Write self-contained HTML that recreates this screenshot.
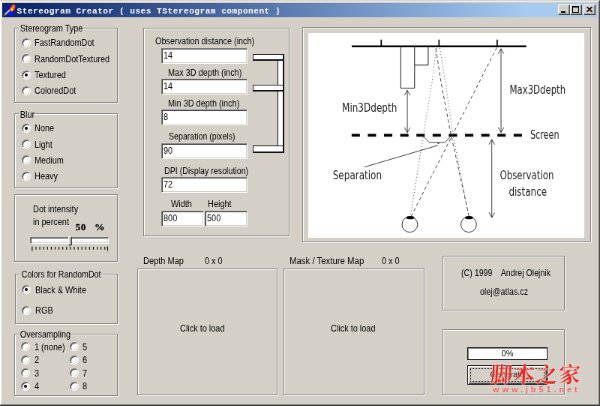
<!DOCTYPE html>
<html>
<head>
<meta charset="utf-8">
<title>Stereogram Creator</title>
<style>
html,body{margin:0;padding:0;width:600px;height:406px;overflow:hidden;background:#d4d0c8;}
#win{position:absolute;left:0;top:0;width:800px;height:542px;transform:scale(0.75);transform-origin:0 0;will-change:transform;font-family:"Liberation Sans",sans-serif;font-size:11px;color:#000;overflow:hidden;}
#win *{box-sizing:border-box;}
.abs{position:absolute;}
.frameL{position:absolute;left:-1px;top:0;width:801px;height:540.5px;border:1px solid;border-color:#d4d0c8 #404040 #404040 #d4d0c8;}
.frameI{position:absolute;left:0px;top:1px;width:799px;height:538.5px;border:1px solid;border-color:#fff #808080 #808080 #fff;}
#title{position:absolute;left:3px;top:4px;width:793px;height:18.6px;background:linear-gradient(to right,#0a246a 0%,#0a246a 2%,#a6caf0 88%,#a6caf0 100%);}
#title .cap{position:absolute;left:19.6px;top:3.6px;font-family:"Liberation Mono",monospace;font-weight:bold;font-size:11.2px;letter-spacing:0.46px;line-height:14px;color:#fff;white-space:pre;}
.tb{position:absolute;top:2px;width:16px;height:14px;background:#d4d0c8;border:1px solid;border-color:#fff #404040 #404040 #fff;box-shadow:inset -1px -1px 0 #808080;}
.gb{position:absolute;border:1px solid #808080;box-shadow:1px 1px 0 #fff, inset 1px 1px 0 #fff;}
.gbl{font-size:12px;transform:scaleX(.91);transform-origin:0 0;position:absolute;background:#d4d0c8;padding:0 0 0 2px;line-height:13px;white-space:pre;}
.lbl{font-size:12px;transform:scaleX(.91);transform-origin:0 0;position:absolute;line-height:13px;white-space:pre;}
.rd{position:absolute;width:12px;height:12px;border-radius:50%;background:#fff;border:1px solid;border-color:#808080 #fff #fff #808080;box-shadow:inset 1px 1px 0 #404040, inset -1px -1px 0 #d4d0c8;transform:rotate(0deg);}
.rd.on::after{content:"";position:absolute;left:3px;top:3px;width:4px;height:4px;border-radius:50%;background:#000;}
.ed span{display:inline-block;font-size:12px;transform:scaleX(.91);transform-origin:0 0;}
.ed{position:absolute;height:21px;background:#fff;border:1px solid;border-color:#808080 #fff #fff #808080;box-shadow:inset 1px 1px 0 #404040, inset -1px -1px 0 #d4d0c8;padding:3px 0 0 2.4px;line-height:13px;}
.br{position:absolute;background:#111;}
.br::after{content:"";position:absolute;left:1px;top:1px;right:1.6px;bottom:1.6px;background:#fff;}
.pn{position:absolute;border:1px solid #808080;box-shadow:1px 1px 0 #fff, inset 1px 1px 0 #fff;}
</style>
</head>
<body>
<div id="win">
  <div class="frameL"></div><div class="frameI"></div>
  <div class="abs" style="left:0;top:540.5px;width:800px;height:3px;background:#101018"></div>
  <div class="abs" style="left:0;top:2px;width:1.5px;height:536px;background:#fff"></div>

  <div id="title">
    <svg class="abs" style="left:0;top:0" width="20" height="18" viewBox="0 0 20 18">
      <path d="M4 4 L11 3 L11 9 L5 14 Z" fill="#0a18b0"/>
      <path d="M6.5 16.5 L10 11.5 L17 11.5 L15.5 15 L12 16.8 Z" fill="#0818f0"/>
      <path d="M3.2 15.6 L11 8.6" stroke="#b8b8b8" stroke-width="2.6" stroke-linecap="round"/>
      <path d="M4 16.4 L11.6 9.6" stroke="#606060" stroke-width="0.9"/>
      <path d="M2.6 15.2 L3.8 16.6" stroke="#202020" stroke-width="1.2"/>
      <path d="M10.6 10.4 C9.2 8 10.6 6.4 12 4.6 C12.6 3.4 13.4 2.2 14.6 1 C15 2.2 15.6 2.6 16.8 2 C17.6 3.6 17.8 5.6 17 7.4 C16.4 9.4 15 10.8 13.4 11.4 C12.2 11.6 11.2 11.2 10.6 10.4 Z" fill="#f03818"/>
      <path d="M12.4 6 C13 5 13.6 3.6 14.6 2.4 C15.2 3.6 16 4 16.6 3.6 C16.8 5 16.4 6.4 15.6 7.4 Z" fill="#ff7a18"/>
      <path d="M11.4 9.6 C10.8 8.2 11.6 7 12.8 5.8 C13.4 7 14.6 7.4 14.4 8.8 C14.2 10 13 10.6 12.2 10.4 Z" fill="#ffe020"/>
    </svg>
    <div class="cap">Stereogram Creator ( uses TStereogram component )</div>
    <div class="tb" style="left:740.8px"><div class="abs" style="left:3px;top:8px;width:6px;height:2px;background:#000"></div></div>
    <div class="tb" style="left:756.8px"><div class="abs" style="left:2px;top:1px;width:9px;height:9px;border:1px solid #000;border-top-width:2px"></div></div>
    <div class="tb" style="left:775.2px"><svg class="abs" style="left:3px;top:2px" width="8" height="7" viewBox="0 0 8 7"><path d="M0.5 0 L7.5 7 M7.5 0 L0.5 7" stroke="#000" stroke-width="1.6"/></svg></div>
  </div>

  <!-- Stereogram Type -->
  <div class="gb" style="left:19px;top:36.5px;width:138px;height:100px"></div>
  <div class="gbl" style="left:25px;top:32.3px">Stereogram Type</div>
  <div class="rd" style="left:28.6px;top:50.9px"></div><div class="lbl" style="left:46px;top:51.4px">FastRandomDot</div>
  <div class="rd" style="left:28.6px;top:72.4px"></div><div class="lbl" style="left:46px;top:72.9px">RandomDotTextured</div>
  <div class="rd on" style="left:28.6px;top:93.5px"></div><div class="lbl" style="left:46px;top:94px">Textured</div>
  <div class="rd" style="left:28.6px;top:114.6px"></div><div class="lbl" style="left:46px;top:115.1px">ColoredDot</div>

  <!-- Blur -->
  <div class="gb" style="left:19px;top:151px;width:138px;height:99.7px"></div>
  <div class="gbl" style="left:25px;top:147.3px">Blur</div>
  <div class="rd on" style="left:28.6px;top:164.5px"></div><div class="lbl" style="left:46px;top:165px">None</div>
  <div class="rd" style="left:28.6px;top:186px"></div><div class="lbl" style="left:46px;top:186.5px">Light</div>
  <div class="rd" style="left:28.6px;top:207.4px"></div><div class="lbl" style="left:46px;top:207.9px">Medium</div>
  <div class="rd" style="left:28.6px;top:228.9px"></div><div class="lbl" style="left:46px;top:229.4px">Heavy</div>

  <!-- Dot intensity -->
  <div class="gb" style="left:19px;top:259px;width:138px;height:89.7px"></div>
  <div class="lbl" style="left:44px;top:273.3px">Dot intensity</div>
  <div class="lbl" style="left:44px;top:290.3px">in percent</div>
  <div class="lbl" style="left:100.5px;top:296.2px;font-family:'Liberation Serif',serif;font-weight:bold;font-size:13.5px;line-height:14px;transform:none;letter-spacing:0.6px;-webkit-text-stroke:0.3px #000">50</div>
  <div class="lbl" style="left:126px;top:296.2px;font-family:'Liberation Serif',serif;font-weight:bold;font-size:13.5px;line-height:14px;transform:none;letter-spacing:0.6px;-webkit-text-stroke:0.3px #000">%</div>
  <div class="abs" style="left:40.3px;top:315.6px;width:105px;height:9px;background:#fff;border:1px solid;border-color:#808080 #fff #fff #808080;box-shadow:inset 1px 1px 0 #404040, inset -1px -1px 0 #d4d0c8"></div>
  <div class="abs" style="left:91.3px;top:315px;width:5px;height:12px;background:#d4d0c8;border:1px solid;border-color:#fff #404040 #404040 #fff;box-shadow:inset -1px 0 0 #808080"></div>
  <div class="abs" style="left:92.3px;top:327px;width:0;height:0;border-left:1.5px solid transparent;border-right:1.5px solid transparent;border-top:2px solid #404040"></div>
  <svg class="abs" style="left:40px;top:327.7px" width="110" height="8" viewBox="0 0 110 8">
    <path d="M2.9 0.4V6.4 M8.0 1V4.8 M13.1 1V4.8 M18.2 1V4.8 M23.3 1V4.8 M28.4 1V4.8 M33.5 1V4.8 M38.6 1V4.8 M43.7 1V4.8 M48.8 1V4.8 M53.9 1V4.8 M59.0 1V4.8 M64.1 1V4.8 M69.2 1V4.8 M74.3 1V4.8 M79.4 1V4.8 M84.5 1V4.8 M89.6 1V4.8 M94.7 1V4.8 M99.8 1V4.8 M103.4 0.4V6.4" stroke="#000" stroke-width="1.1"/>
  </svg>

  <!-- Colors -->
  <div class="gb" style="left:20px;top:364.5px;width:137px;height:67.5px"></div>
  <div class="gbl" style="left:26.8px;top:360.3px;transform:scaleX(.885)">Colors for RandomDot</div>
  <div class="rd on" style="left:28.6px;top:380.3px"></div><div class="lbl" style="left:47px;top:380.8px">Black &amp; White</div>
  <div class="rd" style="left:28.6px;top:407.7px"></div><div class="lbl" style="left:47px;top:408.2px">RGB</div>

  <!-- Oversampling -->
  <div class="gb" style="left:19px;top:445px;width:138px;height:82.8px"></div>
  <div class="gbl" style="left:25px;top:440.3px">Oversampling</div>
  <div class="rd" style="left:28px;top:456.3px"></div><div class="lbl" style="left:46px;top:456.8px">1 (none)</div>
  <div class="rd" style="left:28px;top:473.7px"></div><div class="lbl" style="left:46px;top:474.2px">2</div>
  <div class="rd" style="left:28px;top:491.3px"></div><div class="lbl" style="left:46px;top:491.8px">3</div>
  <div class="rd on" style="left:28px;top:508.7px"></div><div class="lbl" style="left:46px;top:509.2px">4</div>
  <div class="rd" style="left:92.6px;top:456.3px"></div><div class="lbl" style="left:110px;top:456.8px">5</div>
  <div class="rd" style="left:92.6px;top:473.7px"></div><div class="lbl" style="left:110px;top:474.2px">6</div>
  <div class="rd" style="left:92.6px;top:491.3px"></div><div class="lbl" style="left:110px;top:491.8px">7</div>
  <div class="rd" style="left:92.6px;top:508.7px"></div><div class="lbl" style="left:110px;top:509.2px">8</div>

  <!-- Middle panel -->
  <div class="gb" style="left:191px;top:36.5px;width:195px;height:278.5px"></div>
  <div class="lbl" style="left:207.4px;top:49.3px;transform:scaleX(.905)">Observation distance (inch)</div>
  <div class="ed" style="left:215px;top:64px;width:115px"><span>14</span></div>
  <div class="lbl" style="left:224px;top:91.3px">Max 3D depth (inch)</div>
  <div class="ed" style="left:215px;top:105px;width:115px"><span>14</span></div>
  <div class="lbl" style="left:224px;top:132.3px">Min 3D depth (inch)</div>
  <div class="ed" style="left:215px;top:146px;width:115px"><span>8</span></div>
  <div class="lbl" style="left:225px;top:176.3px;transform:scaleX(.885)">Separation (pixels)</div>
  <div class="ed" style="left:215px;top:191px;width:115px"><span>90</span></div>
  <div class="lbl" style="left:219px;top:222.3px;transform:scaleX(.89)">DPI (Display resolution)</div>
  <div class="ed" style="left:215px;top:236px;width:115px"><span>72</span></div>
  <div class="lbl" style="left:228px;top:266.3px">Width</div>
  <div class="lbl" style="left:277px;top:266.3px">Height</div>
  <div class="ed" style="left:215px;top:281px;width:57px"><span>800</span></div>
  <div class="ed" style="left:273px;top:281px;width:57px"><span>500</span></div>

  <div class="br" style="left:370px;top:72px;width:9px;height:132px"></div>
  <div class="br" style="left:337px;top:72px;width:42px;height:9px"></div>
  <div class="br" style="left:337px;top:113px;width:42px;height:9px"></div>
  <div class="br" style="left:337px;top:194px;width:42px;height:10px"></div>

  <!-- Diagram frame -->
  <div class="pn" style="left:403px;top:35.5px;width:385px;height:287px"></div>
  <div class="abs" style="left:410.8px;top:43.7px;width:367.8px;height:273.6px;background:#fff"></div>
  <svg class="abs" style="left:0;top:0" width="800" height="542" viewBox="0 0 600 406.5" font-family="'DejaVu Sans Condensed','Liberation Sans',sans-serif" fill="#000">
    <!-- back plane -->
    <path d="M351.7 46.3H526.3" stroke="#000" stroke-width="2" fill="none"/>
    <path d="M381.2 39.5V46 M439 39.5V46 M497.2 39.5V46" stroke="#000" stroke-width="1.3" fill="none"/>
    <!-- boxes -->
    <path d="M400.7 46.5V88.1H414.6V46.5 M414.6 65.1H428.2V46.5" stroke="#1a1a1a" stroke-width="0.75" stroke-linejoin="miter" fill="none"/>
    <!-- screen -->
    <path d="M351.6 135.3H522" stroke="#000" stroke-width="2.8" stroke-dasharray="8.3 7.9" fill="none"/>
    <!-- dotted -->
    <path d="M436.3 48L431.8 84L423.4 135L410.3 217 M439.8 48L445.7 84L453 135L468.8 217" stroke="#555" stroke-width="0.75" stroke-dasharray="0.9 2.2" fill="none"/>
    <!-- dashed -->
    <path d="M496.8 47.5L410.8 217 M435.8 48.5L441.3 84L451 135L469.2 217" stroke="#444" stroke-width="0.75" stroke-dasharray="3.4 2.6" fill="none"/>
    <!-- arrows -->
    <g stroke="#111" stroke-width="0.62" fill="none">
      <path d="M407.3 90.3V132.5 M404.5 95.3L407.3 90.3L410.1 95.3 M404.5 127.5L407.3 132.5L410.1 127.5"/>
      <path d="M501 48.7V132.5 M498.2 53.7L501 48.7L503.8 53.7 M498.2 127.5L501 132.5L503.8 127.5"/>
      <path d="M491.8 139.5V217.5 M489 144.5L491.8 139.5L494.6 144.5 M489 212.5L491.8 217.5L494.6 212.5"/>
      <path d="M423.5 136.3L429 142.4H445L450.5 136.3 M437.4 142.4L438.4 144L439.4 142.4 M438 145.3L364.5 167"/>
    </g>
    <!-- eyes -->
    <circle cx="409.8" cy="224.4" r="7.8" fill="#fff" stroke="#222" stroke-width="0.72"/>
    <circle cx="468.7" cy="224.4" r="7.8" fill="#fff" stroke="#222" stroke-width="0.72"/>
    <ellipse cx="410.3" cy="217.6" rx="4" ry="1.6"/>
    <ellipse cx="469" cy="217.6" rx="4" ry="1.6"/>
    <!-- labels -->
    <g font-size="12.5" fill="#222">
      <text x="342" y="111.5" textLength="55" lengthAdjust="spacingAndGlyphs">Min3Ddepth</text>
      <text x="509.6" y="94" textLength="56" lengthAdjust="spacingAndGlyphs">Max3Ddepth</text>
      <text x="530.2" y="138.8" textLength="29" lengthAdjust="spacingAndGlyphs">Screen</text>
      <text x="332.8" y="179.4" textLength="49" lengthAdjust="spacingAndGlyphs">Separation</text>
      <text x="499.8" y="179.4" textLength="54" lengthAdjust="spacingAndGlyphs">Observation</text>
      <text x="508.8" y="195.8" textLength="38" lengthAdjust="spacingAndGlyphs">distance</text>
    </g>
  </svg>

  <!-- Depth / Mask -->
  <div class="lbl" style="left:191px;top:342.2px;transform:scaleX(.92)">Depth Map</div>
  <div class="lbl" style="left:273px;top:342.2px">0 x 0</div>
  <div class="pn" style="left:183px;top:358px;width:187px;height:169px"></div>
  <div class="lbl" style="left:240px;top:432.3px">Click to load</div>
  <div class="lbl" style="left:386px;top:342.2px;transform:scaleX(.95)">Mask / Texture Map</div>
  <div class="lbl" style="left:509px;top:342.2px">0 x 0</div>
  <div class="pn" style="left:378px;top:358px;width:188px;height:169px"></div>
  <div class="lbl" style="left:441px;top:432.3px">Click to load</div>

  <!-- Info -->
  <div class="pn" style="left:590px;top:340.8px;width:163px;height:73px"></div>
  <div class="lbl" style="left:615px;top:358.3px;transform:scaleX(.888)">(C) 1999    Andrej Olejnik</div>
  <div class="lbl" style="left:640px;top:383.3px;transform:scaleX(.895)">olej@atlas.cz</div>

  <!-- Bottom -->
  <div class="pn" style="left:589.6px;top:438.6px;width:163.4px;height:88.4px"></div>
  <div class="abs" style="left:623px;top:463px;width:107px;height:17px;background:#fff;border:1px solid #000;text-align:center;line-height:14px;box-shadow:inset 1px 1px 0 #808080">0%</div>
  <div class="abs" style="left:623px;top:487px;width:107px;height:26px;background:#d4d0c8;border:1px solid #000;box-shadow:inset 1px 1px 0 #fff, inset -1px -1px 0 #404040, inset -2px -2px 0 #808080;text-align:center;line-height:22px">Generate
    <div class="abs" style="left:3px;top:2.8px;width:99px;height:18.4px;border:1px dotted #000"></div>
  </div>

  <!-- watermark -->
  <div class="abs" style="left:653.5px;top:479.5px;font-family:'Noto Serif CJK SC','Noto Sans CJK SC',serif;font-weight:700;font-size:29px;line-height:36px;color:#ea2a22;white-space:nowrap;letter-spacing:1.4px;transform:skewX(-4deg);text-shadow:0 0 2px #fff,0 0 1px #fff">脚本之家</div>
  <div class="abs" style="left:657px;top:513px;font-family:'Liberation Sans',sans-serif;font-weight:bold;font-size:11px;line-height:12px;color:#f05a5a;white-space:nowrap;letter-spacing:3.9px;text-shadow:0 0 1.5px #fff">www.jb51.net</div>
</div>
</body>
</html>
